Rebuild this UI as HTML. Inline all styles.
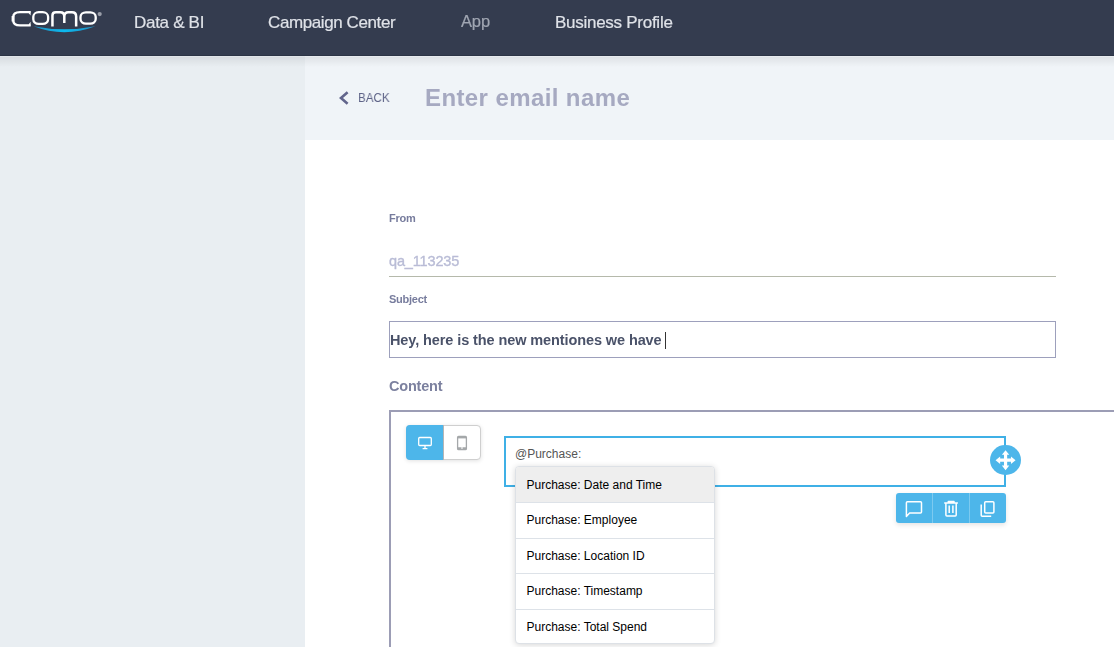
<!DOCTYPE html>
<html><head><meta charset="utf-8">
<style>
*{box-sizing:border-box;margin:0;padding:0}
html,body{width:1114px;height:647px;overflow:hidden;background:#fff;font-family:"Liberation Sans",sans-serif;}
.abs{position:absolute}
#nav{position:absolute;left:0;top:0;width:1114px;height:56px;background:#343c4f;z-index:5;border-bottom:1px solid #2c3445}
#nsh{position:absolute;left:0;top:56px;width:1114px;height:11px;z-index:4;background:linear-gradient(to bottom,rgba(0,0,0,0.04) 0,rgba(0,0,0,0.04) 1px,rgba(0,0,0,0.075) 1px,rgba(0,0,0,0.05) 4px,rgba(0,0,0,0) 11px)}
.nv{will-change:transform;position:absolute;top:12px;font-size:17px;line-height:22px;color:#dfe2e8;white-space:nowrap;-webkit-text-stroke:0.2px #dfe2e8}
#side{position:absolute;left:0;top:55px;width:305px;height:592px;background:#e9eef2}
#hdr{position:absolute;left:305px;top:55px;width:809px;height:85px;background:#f0f4f8}
#main{position:absolute;left:305px;top:140px;width:809px;height:507px;background:#fff}
.t{position:absolute;white-space:nowrap;will-change:transform}
.dv{left:0;width:198px;height:1px;background:#dde2e8}
.rw{left:10.5px;line-height:14px;white-space:nowrap}
</style></head><body>
<div id="side"></div>
<div id="hdr"></div>
<div id="main"></div>
<div id="nsh"></div>
<div id="nav">
<svg class="abs" style="left:0;top:0" width="110" height="40" viewBox="0 0 110 40">
<defs><linearGradient id="sw" x1="0" x2="1" y1="0" y2="0"><stop offset="0" stop-color="#1f8fc4"/><stop offset="0.5" stop-color="#0cb9ee"/><stop offset="1" stop-color="#1f8fc4"/></linearGradient></defs>
<g fill="none" stroke="#fff" stroke-width="2.3">
<path d="M30.5 12.2 H20 C15 12.2 13.2 14 13.2 17.3 V20.2 C13.2 23.6 15 25.4 20 25.4 H30.5"/>
<path d="M13 16 V21.5" stroke-width="2.8"/>
<rect x="33.3" y="12.2" width="14.8" height="11.7" rx="5.4" ry="4.6"/>
<path d="M52.45 26.6 V15.5 Q52.45 12.3 55.8 12.3 H60.2 Q64.3 12.3 64.3 16.5 V23 M64.3 16.5 Q64.3 12.3 68.3 12.3 H72 Q76.15 12.3 76.15 16.5 V26.6" stroke-width="2.5"/>
<rect x="80.5" y="12.4" width="15.2" height="11.3" rx="5.4" ry="4.6"/>
</g>
<path d="M30.6 10.8 V15.6 L28.6 13 Z M30.6 26.6 V21.8 L28.6 24.4 Z" fill="#fff"/>
<path d="M33.5 26.3 Q64 32.4 95.5 26.3 Q64 38.2 33.5 26.3 Z" fill="url(#sw)"/>
<circle cx="99.7" cy="14.1" r="2.1" fill="#9a9ea9"/>
</svg>
<div class="nv" id="n1" style="left:133.5px;letter-spacing:-0.3px">Data &amp; BI</div>
<div class="nv" id="n2" style="left:268px;letter-spacing:-0.4px">Campaign Center</div>
<div class="nv" id="n3" style="left:461px;top:10.4px;font-size:16.5px;color:#a0a6b2;-webkit-text-stroke:0.2px #a0a6b2;letter-spacing:-0.15px">App</div>
<div class="nv" id="n4" style="left:555px;letter-spacing:-0.27px">Business Profile</div>
</div>

<svg class="abs" style="left:337px;top:89px" width="14" height="18" viewBox="0 0 14 18"><path d="M10.6 3.3 L4 9 L10.6 14.7" fill="none" stroke="#62658c" stroke-width="2.6"/></svg>
<div class="t" id="back" style="left:357.6px;top:90px;font-size:13px;line-height:16px;color:#5f6488;transform:scaleX(0.895);transform-origin:0 0">BACK</div>
<div class="t" id="title" style="left:424.5px;top:84px;font-size:24px;line-height:28px;font-weight:bold;color:#a6a9c1;letter-spacing:0.4px">Enter email name</div>

<div class="t" id="from" style="left:389px;top:211px;font-size:11px;line-height:14px;font-weight:bold;color:#777c9d;letter-spacing:-0.2px">From</div>
<div class="t" id="qa" style="left:389px;top:252px;font-size:14.5px;line-height:18px;color:#b9bcd6;letter-spacing:-0.15px;-webkit-text-stroke:0.35px #b9bcd6">qa_113235</div>
<div class="abs" style="left:389px;top:276px;width:667px;height:1px;background:#b5b9ab"></div>
<div class="t" id="subj" style="left:389px;top:292px;font-size:11px;line-height:14px;font-weight:bold;color:#777c9d;letter-spacing:-0.25px">Subject</div>
<div class="abs" style="left:389px;top:321px;width:667px;height:37px;border:1px solid #9da0bc;background:#fff"></div>
<div class="t" id="hey" style="left:389.6px;top:331px;font-size:14.5px;line-height:19px;font-weight:bold;color:#4a5269;letter-spacing:-0.1px">Hey, here is the new mentiones we have</div>
<div class="abs" style="left:665px;top:332px;width:1px;height:17px;background:#333"></div>
<div class="t" id="content" style="left:389px;top:377px;font-size:14.5px;line-height:18px;font-weight:bold;color:#7c819f;letter-spacing:-0.2px">Content</div>

<div class="abs" style="left:389px;top:410px;width:740px;height:260px;border:2px solid #9c9db5;background:#fff"></div>

<!-- toggle -->
<div class="abs" style="left:406px;top:425px;width:75px;height:35px;border-radius:4px;background:#fff;border:1px solid #cfcfcf;box-shadow:0 1px 4px rgba(0,0,0,0.12)"></div>
<div class="abs" style="left:406px;top:425px;width:37.5px;height:35px;border-radius:4px 0 0 4px;background:#4db6ea;border-right:1px solid #b5b5b5"></div>
<svg class="abs" style="left:417px;top:436px" width="16" height="14" viewBox="0 0 16 14"><rect x="1.7" y="1.5" width="12.6" height="8" rx="1" fill="none" stroke="#fff" stroke-width="1.3"/><path d="M8 9.5v3M5.6 12.6h4.8" stroke="#fff" stroke-width="1.3" fill="none"/></svg>
<svg class="abs" style="left:456px;top:435px" width="12" height="16" viewBox="0 0 12 16"><rect x="1.6" y="1.3" width="8.8" height="13.4" rx="1" fill="none" stroke="#a5a8aa" stroke-width="1.3"/><path d="M1.6 2.6h8.8" stroke="#a5a8aa" stroke-width="1.6"/><path d="M1.6 13.2h3.9M6.5 13.2h3.9" stroke="#a5a8aa" stroke-width="1.8"/></svg>

<!-- blue editor box -->
<div class="abs" style="left:504px;top:436px;width:502px;height:50.5px;border:2px solid #3fb0e6;background:#fff"></div>
<div class="abs" id="atp" style="white-space:nowrap;left:515px;top:447px;font-size:12px;line-height:14px;color:#555">@Purchase:</div>

<!-- move circle -->
<div class="abs" style="left:990px;top:444.5px;width:31px;height:30.8px;border-radius:50%;background:#4db6ea"></div>
<svg class="abs" style="left:995px;top:450px" width="22" height="22" viewBox="0 0 22 22"><path transform="translate(0.56 0.2)" d="M10 0 L13.7 4.6 H11.6 V8.4 H15.4 V6.3 L20 10 L15.4 13.7 V11.6 H11.6 V15.4 H13.7 L10 20 L6.3 15.4 H8.4 V11.6 H4.6 V13.7 L0 10 L4.6 6.3 V8.4 H8.4 V4.6 H6.3 Z" fill="#fff"/></svg>

<!-- action bar -->
<div class="abs" style="left:896px;top:493px;width:110px;height:30px;border-radius:3px;background:#4db6ea;box-shadow:0 2px 5px rgba(0,0,0,0.11)"></div>
<div class="abs" style="left:932px;top:493px;width:1px;height:30px;background:#7ccaf0"></div>
<div class="abs" style="left:969px;top:493px;width:1px;height:30px;background:#7ccaf0"></div>
<svg class="abs" style="left:896px;top:493px" width="110" height="30" viewBox="896 493 110 30" fill="none" stroke="#fff" stroke-width="1.5" stroke-linejoin="round">
<path d="M906.4 516.4 V502.7 Q906.4 501.7 907.4 501.7 H920.5 Q921.5 501.7 921.5 502.7 V512.1 Q921.5 513.1 920.5 513.1 H909.6 Z"/>
<path d="M944.2 503 H957.9 M948.3 502.6 V501.5 H954 V502.6 M945.9 503.4 V515 Q945.9 516 946.9 516 H955.2 Q956.2 516 956.2 515 V503.4 M949.2 505.6 V513 M952.9 505.6 V513"/>
<path d="M984.7 502.7 Q984.7 501.7 985.7 501.7 H992.9 Q993.9 501.7 993.9 502.7 V512.1 Q993.9 513.1 992.9 513.1 H985.7 Q984.7 513.1 984.7 512.1 Z M981.2 504.4 V515.2 Q981.2 516.2 982.2 516.2 H991.2"/>
</svg>

<!-- dropdown -->
<div class="abs" id="dd" style="left:515px;top:466px;width:200px;height:178px;background:#fff;border-radius:4px;border:1px solid #dde1e6;box-shadow:0 1px 6px rgba(0,0,0,0.16);font-size:12px;color:#000">
<div class="abs" style="left:0;top:0;width:198px;height:35px;background:#eee;border-radius:3px 3px 0 0"></div>
<div class="abs dv" style="top:35px"></div>
<div class="abs dv" style="top:71px"></div>
<div class="abs dv" style="top:106px"></div>
<div class="abs dv" style="top:142px"></div>
<div class="abs rw" style="top:11px">Purchase: Date and Time</div>
<div class="abs rw" style="top:46px">Purchase: Employee</div>
<div class="abs rw" style="top:82px">Purchase: Location ID</div>
<div class="abs rw" style="top:117px">Purchase: Timestamp</div>
<div class="abs rw" style="top:153px">Purchase: Total Spend</div>
</div>
</body></html>
